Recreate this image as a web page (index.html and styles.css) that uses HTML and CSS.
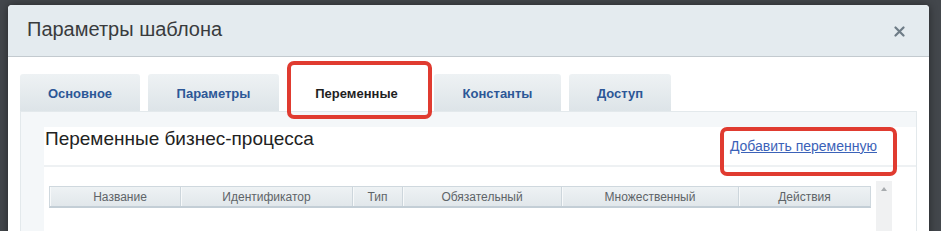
FILE: index.html
```html
<!DOCTYPE html>
<html lang="ru">
<head>
<meta charset="utf-8">
<title>Параметры шаблона</title>
<link rel="stylesheet" href="styles.css">
</head>
<body>
<div class="dialog">
  <div class="dlg-head">
    <span class="dlg-title">Параметры шаблона</span>
    <span class="dlg-close">
      <svg width="11" height="11" viewBox="0 0 11 11"><path d="M1.5 1.5 L9.5 9.5 M9.5 1.5 L1.5 9.5" stroke="#6e7c86" stroke-width="2.2" stroke-linecap="round"/></svg>
    </span>
  </div>
  <div class="dlg-body">
    <div class="tabs">
      <div class="tab t1">Основное</div>
      <div class="tab t2">Параметры</div>
      <div class="tab t3 active">Переменные<span class="mark mark-tab"></span></div>
      <div class="tab t4">Константы</div>
      <div class="tab t5">Доступ</div>
    </div>
    <div class="panel">
      <div class="content">
        <div class="content-head">
          <h2 class="content-title">Переменные бизнес-процесса</h2>
          <a class="add-link" href="#">Добавить переменную<span class="mark mark-link"></span></a>
        </div>
        <div class="table-area">
          <div class="grid-head">
            <div class="col c1">Название</div>
            <div class="col c2">Идентификатор</div>
            <div class="col c3">Тип</div>
            <div class="col c4">Обязательный</div>
            <div class="col c5">Множественный</div>
            <div class="col c6">Действия</div>
          </div>
          <div class="scrollbar"><span class="arrow"></span></div>
        </div>
      </div>
    </div>
  </div>
</div>
</body>
</html>
```
FILE: styles.css
```css
html, body {
  margin: 0;
  padding: 0;
}
body {
  background: #43474c;
  width: 941px;
  height: 231px;
  overflow: hidden;
  font-family: "Liberation Sans", Arial, sans-serif;
}
.dialog {
  margin: 5px 0 0 8px;
  width: 921px;
  height: 240px;
  background: #fff;
  border-radius: 4px 4px 0 0;
  box-shadow: 0 0 8px rgba(0,0,0,0.45);
  display: flex;
  flex-direction: column;
}
.dlg-head {
  height: 52px;
  background: #e4ebef;
  border-bottom: 1px solid #c3cacf;
  border-radius: 4px 4px 0 0;
  display: flex;
  align-items: center;
  justify-content: space-between;
  padding: 0 24px 0 19px;
  box-sizing: border-box;
}
.dlg-title {
  font-size: 20px;
  color: #393b3d;
  margin-top: -2px;
}
.dlg-close {
  display: flex;
  margin-top: 2px;
}
.dlg-body {
  padding: 17px 12px 0 12px;
}
.tabs {
  display: flex;
  gap: 8px;
  height: 37px;
}
.tab {
  position: relative;
  height: 37px;
  box-sizing: border-box;
  display: flex;
  align-items: center;
  justify-content: center;
  font-size: 13px;
  font-weight: bold;
  color: #2c5797;
  background: linear-gradient(#eef2f4, #dde4e8);
  border-radius: 3px 3px 0 0;
  padding-top: 1px;
}
.t1 { width: 120px; }
.t2 { width: 131px; }
.t3 { width: 139px; }
.t4 { width: 127px; }
.t5 { width: 102px; }
.tab.active {
  background: #fff;
  color: #1f1f1f;
}
.mark {
  position: absolute;
  border: 4px solid #e03b30;
  border-radius: 7px;
  box-sizing: border-box;
}
.mark-tab {
  left: 0;
  top: -13px;
  width: 145px;
  height: 58px;
}
.panel {
  background: #f4f7f9;
  border: 1px solid #e3e9ec;
  border-bottom: none;
  padding: 15px 0 0 23px;
  height: 120px;
  box-sizing: border-box;
}
.content {
  background: #fff;
  height: 100%;
}
.content-head {
  height: 38px;
  border-bottom: 2px solid #eef1f3;
  display: flex;
  justify-content: space-between;
  align-items: flex-start;
  padding-right: 39px;
}
.content-title {
  margin: 0;
  font-weight: normal;
  font-size: 19px;
  color: #222;
  padding: 1px 0 0 1px;
}
.add-link {
  position: relative;
  font-size: 14px;
  color: #3b62b8;
  text-decoration: underline;
  margin-top: 11px;
}
.mark-link {
  left: -10px;
  top: -11px;
  width: 177px;
  height: 49px;
}
.table-area {
  display: flex;
  align-items: flex-start;
  padding: 14px 0 0 5px;
}
.grid-head {
  display: flex;
  width: 822px;
  height: 22px;
  margin-top: 5px;
  background: linear-gradient(#eef2f4, #e1e7eb);
  border: 1px solid #cfd8de;
  border-bottom: 2px solid #c3ced6;
  box-sizing: border-box;
}
.col {
  display: flex;
  align-items: center;
  justify-content: center;
  box-sizing: border-box;
  font-size: 12px;
  color: #5e6468;
  border-right: 1px solid #cdd6dc;
  box-shadow: inset 1px 0 0 #f7f9fa;
}
.col:last-child { border-right: none; }
.c1 { width: 131px; padding-left: 10px; }
.c2 { width: 172px; }
.c3 { width: 50px; }
.c4 { width: 159px; }
.c5 { width: 177px; }
.c6 { flex: 1; }
.scrollbar {
  margin-left: 5px;
  width: 16px;
  height: 60px;
  background: #f0f1f2;
  display: flex;
  justify-content: center;
  padding-top: 6px;
  box-sizing: border-box;
}
.arrow {
  width: 0;
  height: 0;
  border-left: 3.5px solid transparent;
  border-right: 3.5px solid transparent;
  border-bottom: 4px solid #a7abae;
}
```
